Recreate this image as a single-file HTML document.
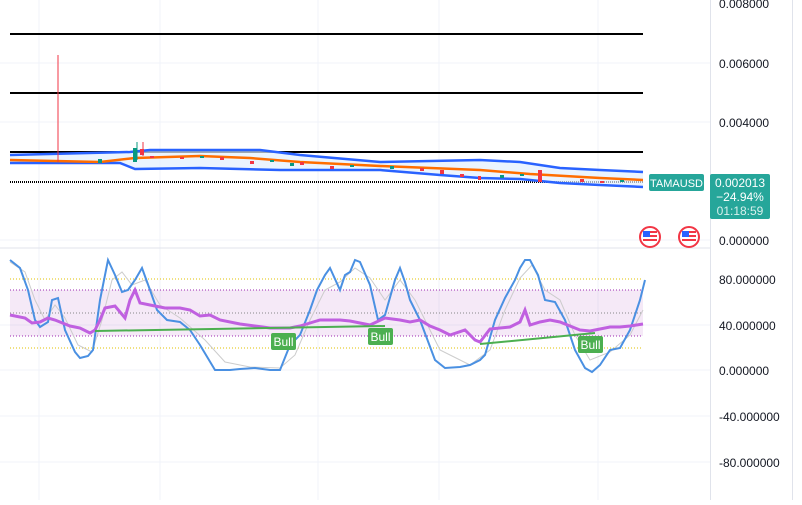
<!DOCTYPE html><html><head><style>
body{margin:0;background:#fff;width:802px;height:500px;overflow:hidden;font-family:"Liberation Sans",sans-serif}
</style></head><body>
<svg width="802" height="500" xmlns="http://www.w3.org/2000/svg" font-family="Liberation Sans, sans-serif">
<g stroke="#f0f3fa" stroke-width="1">
<line x1="39" y1="0" x2="39" y2="500"/><line x1="160" y1="0" x2="160" y2="500"/><line x1="318" y1="0" x2="318" y2="500"/><line x1="439" y1="0" x2="439" y2="500"/><line x1="598" y1="0" x2="598" y2="500"/>
<line x1="0" y1="63" x2="710" y2="63"/><line x1="0" y1="122" x2="710" y2="122"/><line x1="0" y1="240" x2="710" y2="240"/>
<line x1="0" y1="325" x2="710" y2="325"/><line x1="0" y1="370" x2="710" y2="370"/><line x1="0" y1="416" x2="710" y2="416"/><line x1="0" y1="462" x2="710" y2="462"/>
</g>
<line x1="0" y1="248" x2="710" y2="248" stroke="#e0e3eb"/>
<line x1="710.5" y1="0" x2="710.5" y2="500" stroke="#e0e3eb"/>
<line x1="792.5" y1="0" x2="792.5" y2="500" stroke="#e0e3eb"/>
<g stroke="#000" stroke-width="2">
<line x1="10" y1="34" x2="643" y2="34"/><line x1="10" y1="93" x2="643" y2="93"/><line x1="10" y1="152" x2="643" y2="152"/>
</g>
<line x1="10" y1="182" x2="643" y2="182" stroke="#000" stroke-width="2" stroke-dasharray="1,1"/>
<polygon points="10,155 130,152 150,150 260,150 300,155 380,162 480,160 520,162 560,168 600,170 643,172 643,187 600,185 560,183 520,179 480,178 440,175 380,170 280,170 200,168 135,169 120,163 10,163" fill="#e3effd" opacity="0.7"/>
<polyline fill="none" stroke="#2962ff" stroke-width="2.5" points="10,155 130,152 150,150 260,150 300,155 380,162 480,160 520,162 560,168 600,170 643,172"/>
<polyline fill="none" stroke="#2962ff" stroke-width="2.5" points="10,163 120,163 135,169 200,168 280,170 380,170 440,175 480,178 520,179 560,183 600,185 643,187"/>
<polyline fill="none" stroke="#ff6d00" stroke-width="2.5" points="10,160 100,162 135,158 200,156 250,158 300,162 380,166 480,170 530,174 600,178 643,180"/>
<line x1="58" y1="55" x2="58" y2="162" stroke="#f23645"/>
<line x1="137" y1="142" x2="137" y2="160" stroke="#089981"/><line x1="143" y1="142" x2="143" y2="156" stroke="#f23645"/>
<rect x="133" y="148" width="4" height="14" fill="#089981"/><rect x="140" y="149" width="4" height="6" fill="#f23645"/>
<g fill="#f23645"><rect x="150" y="156" width="4" height="2"/><rect x="180" y="157" width="4" height="2"/><rect x="220" y="157" width="4" height="3"/><rect x="250" y="161" width="4" height="3"/><rect x="300" y="162" width="4" height="3"/><rect x="330" y="166" width="4" height="3"/><rect x="420" y="168" width="4" height="3"/><rect x="440" y="170" width="4" height="4"/><rect x="460" y="174" width="4" height="3"/><rect x="478" y="176" width="3" height="4"/><rect x="538" y="170" width="4" height="12"/><rect x="580" y="179" width="4" height="3"/><rect x="600" y="181" width="4" height="2"/></g>
<g fill="#089981"><rect x="98" y="159" width="4" height="4"/><rect x="200" y="156" width="4" height="2"/><rect x="270" y="160" width="4" height="2"/><rect x="290" y="163" width="4" height="3"/><rect x="350" y="165" width="4" height="2"/><rect x="390" y="166" width="4" height="3"/><rect x="500" y="175" width="4" height="3"/><rect x="520" y="174" width="4" height="2"/><rect x="620" y="180" width="4" height="2"/></g>
<rect x="649" y="174" width="55" height="17" rx="2" fill="#26a69a"/>
<text x="676.5" y="187" font-size="11" fill="#fff" text-anchor="middle">TAMAUSD</text>
<rect x="710" y="174" width="60" height="45" rx="2" fill="#26a69a"/>
<text x="740" y="187" font-size="12" fill="#fff" text-anchor="middle">0.002013</text>
<text x="740" y="201" font-size="12" fill="#fff" text-anchor="middle">−24.94%</text>
<text x="740" y="215" font-size="12" fill="#d8f0ec" text-anchor="middle">01:18:59</text>
<g><circle cx="650" cy="237" r="10" fill="#fff" stroke="#f23645" stroke-width="2"/><rect x="643" y="231" width="14" height="10" fill="#f23645"/><rect x="643" y="233" width="14" height="2" fill="#fff"/><rect x="643" y="237" width="14" height="2" fill="#fff"/><rect x="643" y="231" width="7" height="6" fill="#2962ff"/>
<circle cx="689" cy="237" r="10" fill="#fff" stroke="#f23645" stroke-width="2"/><rect x="682" y="231" width="14" height="10" fill="#f23645"/><rect x="682" y="233" width="14" height="2" fill="#fff"/><rect x="682" y="237" width="14" height="2" fill="#fff"/><rect x="682" y="231" width="7" height="6" fill="#2962ff"/></g>
<g font-size="12" fill="#131722">
<text x="719" y="8">0.008000</text><text x="719" y="68">0.006000</text><text x="719" y="127">0.004000</text><text x="719" y="245">0.000000</text>
<text x="719" y="284">80.000000</text><text x="719" y="330">40.000000</text><text x="719" y="375">0.000000</text><text x="719" y="421">-40.000000</text><text x="719" y="467">-80.000000</text>
</g>
<rect x="10" y="290" width="633" height="46" fill="#9c27b0" opacity="0.1"/>
<g stroke-width="1" fill="none" stroke-dasharray="1,2">
<line x1="10" y1="279" x2="643" y2="279" stroke="#e0c000"/><line x1="10" y1="348" x2="643" y2="348" stroke="#e0c000"/>
<line x1="10" y1="290" x2="643" y2="290" stroke="#9c27b0"/><line x1="10" y1="336" x2="643" y2="336" stroke="#9c27b0"/>
<line x1="10" y1="313" x2="643" y2="313" stroke="#888"/>
</g>
<polyline fill="none" stroke="#ccc" stroke-width="1" points="10,262 25,272 35,300 45,320 55,305 65,318 78,345 92,352 102,320 112,280 122,272 132,285 145,280 160,305 180,318 205,340 225,362 250,367 280,368 295,355 310,320 325,290 340,282 355,268 370,278 385,300 400,280 415,300 440,350 470,365 490,350 505,310 520,278 532,265 545,290 560,300 575,335 590,360 610,352 630,335 643,310"/>
<polyline fill="none" stroke="#4a90e2" stroke-width="2" points="10,260 20,268 28,290 35,320 40,327 48,322 52,300 58,298 65,330 75,352 80,358 88,356 93,350 100,300 108,260 115,275 122,292 128,290 135,280 142,268 150,290 157,310 167,320 180,322 190,330 200,345 215,370 230,370 240,369 255,368 270,370 280,370 290,345 300,335 310,310 317,290 325,275 330,268 340,290 345,275 350,272 355,260 360,262 370,285 378,320 385,315 395,280 400,268 405,282 410,300 420,320 435,360 445,368 460,367 470,365 480,360 485,355 495,320 505,298 515,280 520,268 525,260 530,260 538,275 545,300 555,302 565,320 575,350 585,368 592,372 600,365 610,350 620,348 630,330 640,300 645,280"/>
<polyline fill="none" stroke="#c060e0" stroke-width="3" points="10,315 25,318 32,323 40,322 48,318 55,320 60,322 70,326 80,328 90,333 95,330 100,320 105,308 115,306 125,318 130,300 135,290 140,303 150,305 165,308 180,308 190,310 200,316 210,315 220,320 240,324 255,326 270,328 290,328 300,326 310,323 320,320 340,320 350,321 360,323 370,325 385,318 400,320 410,322 420,320 430,326 440,330 450,335 465,330 475,340 480,342 490,329 500,328 510,327 520,322 525,310 530,325 540,322 550,320 560,322 570,326 580,330 590,331 600,329 610,327 620,327 630,326 643,324"/>
<line x1="95" y1="331" x2="385" y2="326" stroke="#4caf50" stroke-width="2"/>
<line x1="480" y1="344" x2="595" y2="333" stroke="#4caf50" stroke-width="2"/>
<g font-size="12" fill="#fff" text-anchor="middle">
<rect x="271" y="333" width="25" height="17" rx="2" fill="#4caf50"/><text x="283.5" y="346">Bull</text>
<rect x="368" y="328" width="25" height="17" rx="2" fill="#4caf50"/><text x="380.5" y="341">Bull</text>
<rect x="578" y="336" width="25" height="17" rx="2" fill="#4caf50"/><text x="590.5" y="349">Bull</text>
</g>
</svg>
</body></html>
